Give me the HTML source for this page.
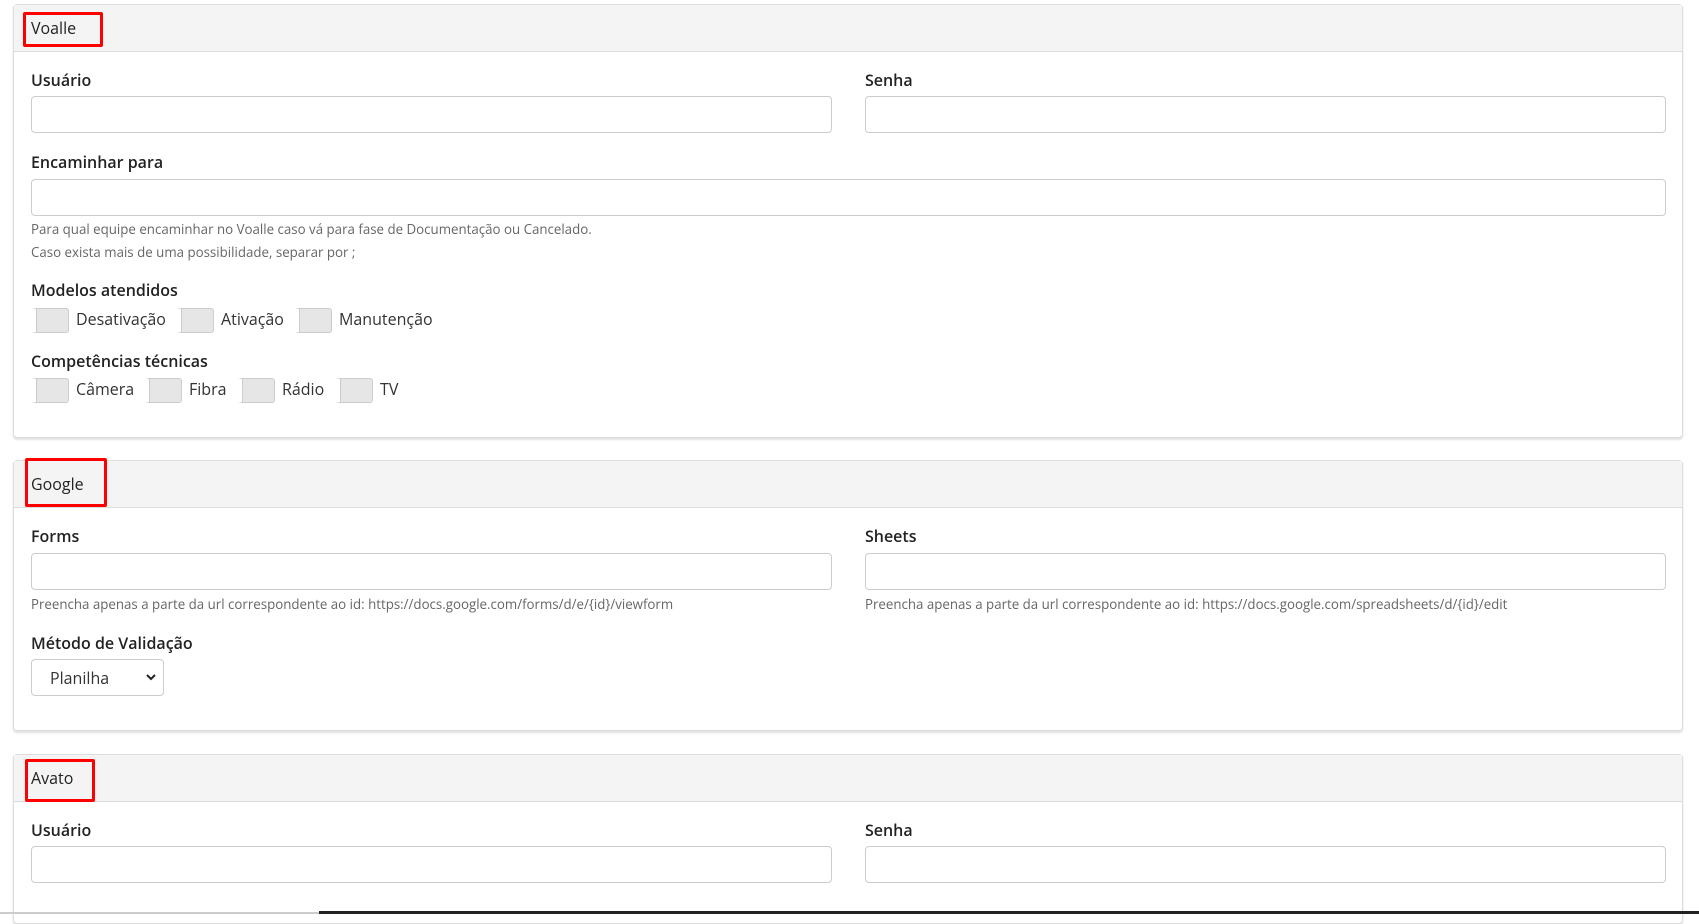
<!DOCTYPE html>
<html><head><meta charset="utf-8"><style>
*{box-sizing:border-box;margin:0;padding:0}
body{width:1699px;height:914px;background:#fff;position:relative;overflow:hidden;font-family:"Open Sans","Liberation Sans",sans-serif;color:#222}
.p{position:absolute;left:13px;width:1670px;border:1px solid #ddd;border-radius:4px;background:#fff;box-shadow:0 2px 2px rgba(0,0,0,.12)}
.h{position:absolute;left:0;top:0;right:0;height:47px;background:#f4f4f4;border-bottom:1px solid #ddd}
.rb{position:absolute;border:3px solid #f00;border-radius:2px}
.t{position:absolute;font-size:16px;color:#222;white-space:nowrap}
.l{position:absolute;font-size:16px;font-weight:600;color:#222;white-space:nowrap}
.i{position:absolute;height:37px;border:1px solid #ccc;border-radius:4px;background:#fff}
.s{position:absolute;font-size:13.3px;color:#666;white-space:nowrap}
.tg{position:absolute;width:38px;height:25px;border:1px solid #ccc;border-radius:3px;background:#e6e6e6;border-left:5px solid #fff;box-shadow:inset 1px 0 0 #ccc}
.tt{position:absolute;font-size:16px;color:#333;white-space:nowrap}
</style></head><body>

<div class="p" style="top:4px;height:434px"><div class="h"></div></div>
<div class="rb" style="left:23px;top:12px;width:80px;height:35px"></div>
<div class="t" style="left:31px;top:17px">Voalle</div>
<div class="l" style="left:31px;top:69px">Usuário</div>
<div class="l" style="left:865px;top:69px">Senha</div>
<div class="i" style="left:31px;top:96px;width:801px"></div>
<div class="i" style="left:865px;top:96px;width:801px"></div>
<div class="l" style="left:31px;top:151px">Encaminhar para</div>
<div class="i" style="left:31px;top:179px;width:1635px"></div>
<div class="s" style="left:31px;top:220px">Para qual equipe encaminhar no Voalle caso vá para fase de Documentação ou Cancelado.</div>
<div class="s" style="left:31px;top:243px">Caso exista mais de uma possibilidade, separar por ;</div>
<div class="l" style="left:31px;top:279px">Modelos atendidos</div>
<div class="tg" style="left:31px;top:308px"></div><div class="tt" style="left:76px;top:308px">Desativação</div>
<div class="tg" style="left:176px;top:308px"></div><div class="tt" style="left:221px;top:308px">Ativação</div>
<div class="tg" style="left:294px;top:308px"></div><div class="tt" style="left:339px;top:308px">Manutenção</div>
<div class="l" style="left:31px;top:350px">Competências técnicas</div>
<div class="tg" style="left:31px;top:378px"></div><div class="tt" style="left:76px;top:378px">Câmera</div>
<div class="tg" style="left:144px;top:378px"></div><div class="tt" style="left:189px;top:378px">Fibra</div>
<div class="tg" style="left:237px;top:378px"></div><div class="tt" style="left:282px;top:378px">Rádio</div>
<div class="tg" style="left:335px;top:378px"></div><div class="tt" style="left:380px;top:378px">TV</div>

<div class="p" style="top:460px;height:271px"><div class="h"></div></div>
<div class="rb" style="left:25px;top:458px;width:82px;height:49px"></div>
<div class="t" style="left:31px;top:473px">Google</div>
<div class="l" style="left:31px;top:525px">Forms</div>
<div class="l" style="left:865px;top:525px">Sheets</div>
<div class="i" style="left:31px;top:553px;width:801px"></div>
<div class="i" style="left:865px;top:553px;width:801px"></div>
<div class="s" style="left:31px;top:595px">Preencha apenas a parte da url correspondente ao id: https://docs.google.com/forms/d/e/{id}/viewform</div>
<div class="s" style="left:865px;top:595px">Preencha apenas a parte da url correspondente ao id: https://docs.google.com/spreadsheets/d/{id}/edit</div>
<div class="l" style="left:31px;top:632px">Método de Validação</div>
<div class="i" style="left:31px;top:659px;width:133px"></div>
<div class="tt" style="left:50px;top:667px">Planilha</div>
<svg style="position:absolute;left:145px;top:673px" width="12" height="8"><path d="M2 2 L6 6 L10 2" stroke="#222" stroke-width="2" fill="none"/></svg>

<div class="p" style="top:754px;height:170px"><div class="h"></div></div>
<div class="rb" style="left:25px;top:759px;width:70px;height:43px"></div>
<div class="t" style="left:31px;top:767px">Avato</div>
<div class="l" style="left:31px;top:819px">Usuário</div>
<div class="l" style="left:865px;top:819px">Senha</div>
<div class="i" style="left:31px;top:846px;width:801px"></div>
<div class="i" style="left:865px;top:846px;width:801px"></div>

<div style="position:absolute;left:0;top:912px;width:319px;height:2px;background:#ccc"></div>
<div style="position:absolute;left:319px;top:911px;width:1380px;height:3px;background:#222"></div>
</body></html>
